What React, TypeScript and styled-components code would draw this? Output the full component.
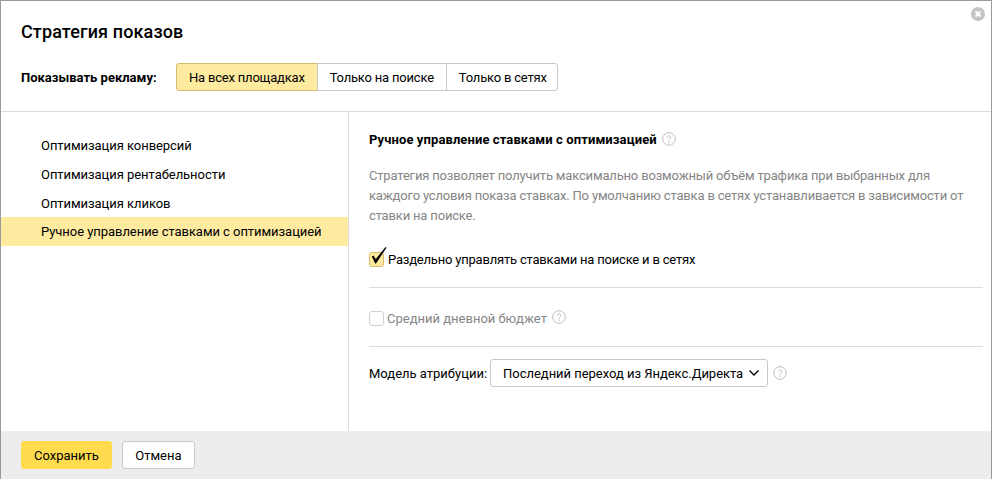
import styled, { createGlobalStyle } from 'styled-components';

const GlobalStyle = createGlobalStyle`
	html, body {
		margin: 0;
		padding: 0;
		background: #fff;
	}
	body {
		font-family: Roboto, 'Liberation Sans', sans-serif;
		font-size: 13px;
		color: #000;
	}
`;

const Modal = styled.div`
	width: 992px;
	height: 479px;
	box-sizing: border-box;
	border: 1px solid #9a9a9a;
	border-bottom: none;
	display: flex;
	flex-direction: column;
	position: relative;
`;

const CloseButton = styled.button`
	position: absolute;
	top: 6px;
	right: 6px;
	width: 14px;
	height: 14px;
	padding: 0;
	border: none;
	background: none;
	display: block;
`;

const Header = styled.header`
	height: 111px;
	flex: none;
	box-sizing: border-box;
	padding: 19px 20px 0;
	border-bottom: 1px solid #dcdcdc;
`;

const Title = styled.h1`
	margin: 0;
	font-size: 18px;
	line-height: 24px;
	font-weight: 500;
	letter-spacing: 0.12px;
`;

const ShowRow = styled.div`
	display: flex;
	align-items: center;
	margin-top: 19px;
`;

const ShowLabel = styled.span`
	font-weight: 700;
	width: 155px;
`;

const Segments = styled.div`
	display: flex;
`;

const Segment = styled.div<{ $active?: boolean }>`
	height: 28px;
	box-sizing: border-box;
	padding: 0 12px;
	display: flex;
	align-items: center;
	letter-spacing: -0.2px;
	border: 1px solid ${(p) => (p.$active ? '#d6bc6b' : '#c8c8c8')};
	background: ${(p) => (p.$active ? '#ffeba0' : '#fff')};
	margin-left: -1px;
	&:first-child {
		margin-left: 0;
		border-radius: 3px 0 0 3px;
	}
	&:last-child {
		padding-right: 10px;
		border-radius: 0 3px 3px 0;
	}
`;

const Body = styled.div`
	flex: 1;
	display: flex;
	min-height: 0;
`;

const Sidebar = styled.nav`
	width: 348px;
	flex: none;
	box-sizing: border-box;
	padding-top: 19px;
	border-right: 1px solid #dcdcdc;
`;

const MenuItem = styled.div<{ $active?: boolean }>`
	height: 29px;
	line-height: 29px;
	padding-left: 40px;
	letter-spacing: -0.05px;
	margin-top: ${(p) => (p.$active ? '-1px' : '0')};
	background: ${(p) => (p.$active ? '#ffeba0' : 'transparent')};
`;

const Content = styled.main`
	flex: 1;
	box-sizing: border-box;
	padding: 18px 8px 0 20px;
`;

const SectionTitle = styled.div`
	display: flex;
	align-items: center;
	gap: 5px;
	font-weight: 700;
	line-height: 20px;
	letter-spacing: 0.1px;
`;

const SectionHint = styled.span`
	display: flex;
	margin-top: -2px;
`;

const Description = styled.p`
	margin: 16px 0 0;
	color: #858585;
	line-height: 20px;
	letter-spacing: -0.17px;
`;

const CheckRow = styled.label<{ $disabled?: boolean }>`
	display: flex;
	align-items: center;
	height: 20px;
	margin-top: 23px;
	letter-spacing: ${(p) => (p.$disabled ? '0' : '-0.2px')};
	color: ${(p) => (p.$disabled ? '#858585' : '#000')};
`;

const CheckBox = styled.span<{ $checked?: boolean }>`
	position: relative;
	width: 13px;
	height: 13px;
	flex: none;
	margin-right: ${(p) => (p.$checked ? '4px' : '3px')};
	border-radius: 3px;
	border: 1px solid ${(p) => (p.$checked ? '#d6bc6b' : '#cfcfcf')};
	background: ${(p) => (p.$checked ? '#ffeba0' : '#fff')};
`;

const CheckMark = styled.svg`
	position: absolute;
	left: 0;
	top: -6px;
	width: 17px;
	height: 20px;
`;

const Divider = styled.hr`
	margin: 18px 0 0;
	border: none;
	border-top: 1px solid #dcdcdc;
`;

const BudgetRow = styled(CheckRow)`
	margin-top: 20px;
`;

const Attribution = styled.div`
	display: flex;
	align-items: center;
	margin-top: 12px;
`;

const Select = styled.div`
	width: 278px;
	height: 28px;
	box-sizing: border-box;
	margin-left: 3px;
	padding: 0 7px 0 12px;
	display: flex;
	align-items: center;
	justify-content: space-between;
	letter-spacing: -0.03px;
	border: 1px solid #c8c8c8;
	border-radius: 3px;
`;

const Footer = styled.footer`
	height: 48px;
	flex: none;
	background: #ededed;
	box-sizing: border-box;
	padding: 10px 20px;
	display: flex;
	gap: 10px;
`;

const Button = styled.button<{ $primary?: boolean }>`
	height: 28px;
	padding: 0 12px;
	font: inherit;
	color: #000;
	border-radius: 3px;
	border: 1px solid ${(p) => (p.$primary ? '#ffdb4d' : '#c8c8c8')};
	background: ${(p) => (p.$primary ? '#ffdb4d' : '#fff')};
`;

const CancelButton = styled(Button)`
	width: 73px;
`;

const HintIcon = styled.svg`
	width: 14px;
	height: 14px;
	flex: none;
`;

const Hint = ({ className }: { className?: string }) => (
	<HintIcon className={className} viewBox="0 0 14 14" fill="none">
		<circle cx="7" cy="7" r="6.300" stroke="#bdbdbd" />
		<path d="M5.200 5.600c0-1 .8-1.700 1.800-1.700s1.800.7 1.800 1.600c0 1.300-1.800 1.300-1.800 2.700" stroke="#bdbdbd" />
		<circle cx="7" cy="10.100" r=".8" fill="#bdbdbd" />
	</HintIcon>
);

const BudgetHint = styled(Hint)`
	margin-left: 5px;
	margin-top: -2px;
`;

const AttributionHint = styled(Hint)`
	margin-left: 5px;
`;

const menu = [
	'Оптимизация конверсий',
	'Оптимизация рентабельности',
	'Оптимизация кликов',
	'Ручное управление ставками с оптимизацией'
];

const App = () => (
	<>
		<GlobalStyle />
		<Modal>
			<CloseButton aria-label="close">
				<svg width="14" height="14" viewBox="0 0 14 14">
					<circle cx="7" cy="7" r="7" fill="#c4c4c4" />
					<path d="M4.500 4.500l5 5M9.500 4.500l-5 5" stroke="#fff" strokeWidth="2" />
				</svg>
			</CloseButton>
			<Header>
				<Title>Стратегия показов</Title>
				<ShowRow>
					<ShowLabel>Показывать рекламу:</ShowLabel>
					<Segments>
						<Segment $active>На всех площадках</Segment>
						<Segment>Только на поиске</Segment>
						<Segment>Только в сетях</Segment>
					</Segments>
				</ShowRow>
			</Header>
			<Body>
				<Sidebar>
					{menu.map((item, i) => (
						<MenuItem key={item} $active={i === 3}>
							{item}
						</MenuItem>
					))}
				</Sidebar>
				<Content>
					<SectionTitle>
						Ручное управление ставками с оптимизацией
						<SectionHint>
							<Hint />
						</SectionHint>
					</SectionTitle>
					<Description>
						Стратегия позволяет получить максимально возможный объём трафика при выбранных для
						<br />
						каждого условия показа ставках. По умолчанию ставка в сетях устанавливается в зависимости от
						<br />
						ставки на поиске.
					</Description>
					<CheckRow>
						<CheckBox $checked>
							<CheckMark viewBox="0 0 17 20">
								<path d="M1.800 9.500l1.500-1.100 2.500 3.600L15.500 0l1 .7L6 16.500h-.8z" fill="#000" />
							</CheckMark>
						</CheckBox>
						Раздельно управлять ставками на поиске и в сетях
					</CheckRow>
					<Divider />
					<BudgetRow $disabled>
						<CheckBox />
						Средний дневной бюджет
						<BudgetHint />
					</BudgetRow>
					<Divider />
					<Attribution>
						Модель атрибуции:
						<Select>
							Последний переход из Яндекс.Директа
							<svg width="12" height="8" viewBox="0 0 12 8" fill="none">
								<path d="M1.500 1.500L6 6l4.500-4.500" stroke="#000" strokeWidth="1.300" />
							</svg>
						</Select>
						<AttributionHint />
					</Attribution>
				</Content>
			</Body>
			<Footer>
				<Button $primary>Сохранить</Button>
				<CancelButton>Отмена</CancelButton>
			</Footer>
		</Modal>
	</>
);

export default App;
